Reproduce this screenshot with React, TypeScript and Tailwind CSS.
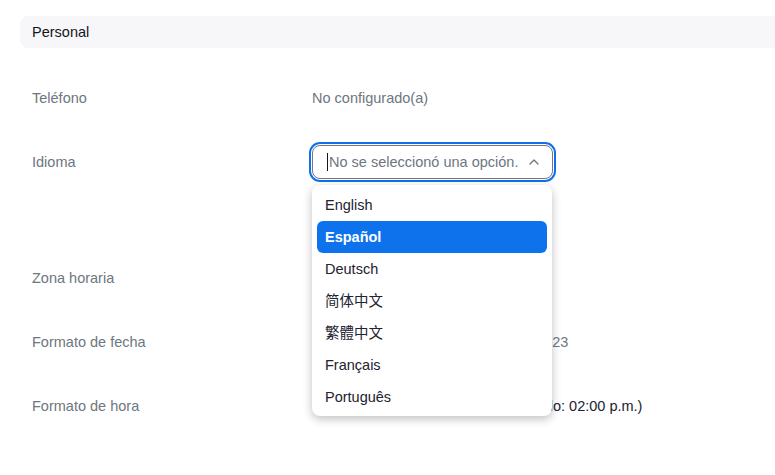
import { ChevronUp } from "lucide-react";

const languages = ["English", "Español", "Deutsch", "简体中文", "繁體中文", "Français", "Português"];

const Row = ({ label, children }: { label: string; children?: React.ReactNode }) => (
  <div className="flex h-[64px] items-center">
    <div className="w-[280px] shrink-0 text-[#6e7680]">{label}</div>
    <div className="flex-1 whitespace-nowrap">{children}</div>
  </div>
);

const App = () => {
  return (
    <div
      className="w-[775px] h-[475px] overflow-hidden bg-white pl-5 pt-4 text-[14.5px] leading-5"
      style={{ fontFamily: '"Liberation Sans", Arial, "Noto Sans CJK SC", sans-serif' }}
    >
      <div className="-mr-6 flex h-[32px] items-center rounded-lg bg-[#f7f7f9] px-3 text-[#131619]">Personal</div>

      <div className="mt-[18px] pl-3">
        <Row label="Teléfono">
          <span className="text-[#6e7680]">No configurado(a)</span>
        </Row>

        <div className="relative">
          <Row label="Idioma">
            <div className="flex h-[34px] w-[241px] items-center justify-between rounded-lg border border-[#747487] pl-[14px] pr-[10px] outline-2 outline-offset-[1px] outline-[#0e71eb]">
              <span className="flex items-center text-[#6e7680]">
                <span className="mr-px h-[18px] w-px bg-[#131619]" />
                No se seleccionó una opción.
              </span>
              <ChevronUp size={16} strokeWidth={2} className="text-[#6e7680]" />
            </div>
          </Row>
          <div className="h-[52px]" />

          <div className="absolute left-[280px] top-[55px] z-10 w-[240px] rounded-lg bg-white px-[5px] pt-[4px] pb-[3px] shadow-[0_3px_10px_rgba(0,0,0,0.25)]">
            {languages.map((lang) => (
              <div
                key={lang}
                className={
                  lang === "Español"
                    ? "flex h-[32px] items-center rounded-md bg-[#0e72ed] px-2 font-bold text-white"
                    : "flex h-[32px] items-center px-2 text-[#222230]"
                }
              >
                {lang}
              </div>
            ))}
          </div>
        </div>

        <Row label="Zona horaria">
          <span className="text-[#6e7680]">(GMT-6:00) Ciudad de México</span>
        </Row>
        <Row label="Formato de fecha">
          <span className="text-[#6e7680]">MM/DD/AAAA (por ejemplo: 08/15/2023</span>
        </Row>
        <Row label="Formato de hora">
          <span className="text-[#222230]">Usar formato de 12 horas (por ejemplo: 02:00 p.m.)</span>
        </Row>
      </div>
    </div>
  );
};

export default App;
